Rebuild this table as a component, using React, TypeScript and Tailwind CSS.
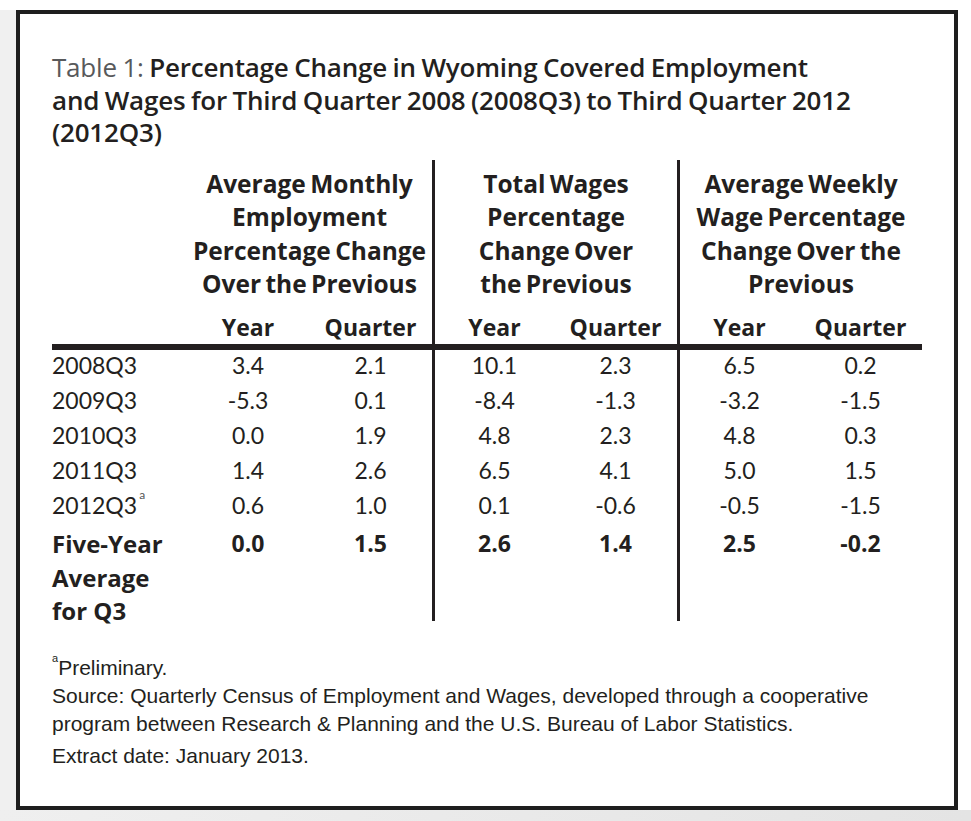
import React from "react";

const rows: [string, string[], boolean?][] = [
  ["2008Q3", ["3.4", "2.1", "10.1", "2.3", "6.5", "0.2"]],
  ["2009Q3", ["-5.3", "0.1", "-8.4", "-1.3", "-3.2", "-1.5"]],
  ["2010Q3", ["0.0", "1.9", "4.8", "2.3", "4.8", "0.3"]],
  ["2011Q3", ["1.4", "2.6", "6.5", "4.1", "5.0", "1.5"]],
  ["2012Q3", ["0.6", "1.0", "0.1", "-0.6", "-0.5", "-1.5"], true],
];
const avg = ["0.0", "1.5", "2.6", "1.4", "2.5", "-0.2"];

const groups = [
  ["Average Monthly", "Employment", "Percentage Change", "Over the Previous"],
  ["Total Wages", "Percentage", "Change Over", "the Previous"],
  ["Average Weekly", "Wage Percentage", "Change Over the", "Previous"],
];

export default function App() {
  const divider = (i: number) => (i === 2 || i === 4 ? "border-l-[3px] border-l-[#231f20]" : "");
  return (
    <div className="w-[971px] h-[821px] bg-white flex flex-col text-[#231f20] [font-family:Lato,'Open_Sans',sans-serif]">
      <div className="h-[10px]" />
      <div className="flex h-[800px]">
        <div className="w-[16px] bg-[#f0f0f0]" />
        <div className="w-[942px] border-4 border-[#1e1e1e] pl-[32px] pt-[37px]">
          <h1 className="text-[26px] leading-[32.5px] font-semibold tracking-[-0.2px] [word-spacing:-1px] [font-family:'Open_Sans',sans-serif]">
            <span className="font-normal text-[#58595b]">Table 1: </span>
            Percentage Change in Wyoming Covered Employment
            <br />
            and Wages for Third Quarter 2008 (2008Q3) to Third Quarter 2012
            <br />
            (2012Q3)
          </h1>
          <div className="mt-[11px] grid grid-cols-[135px_122px_123px_122px_123px_122px_123px] w-[870px]">
            {/* group headers */}
            <div />
            {groups.map((g, gi) => (
              <div
                key={gi}
                className={`col-span-2 pt-[7px] text-center text-[24.5px] leading-[33.5px] font-bold [word-spacing:-2px] [font-family:'Open_Sans',sans-serif] ${gi > 0 ? "border-l-[3px] border-l-[#231f20]" : ""}`}
              >
                {g.map((l, li) => (
                  <div key={li} className="whitespace-nowrap">{l}</div>
                ))}
              </div>
            ))}
            {/* sub headers */}
            <div className="border-b-[6px] border-b-[#231f20]" />
            {["Year", "Quarter", "Year", "Quarter", "Year", "Quarter"].map((t, i) => (
              <div
                key={i}
                className={`pt-[10px] text-center text-[23px] leading-[33.5px] font-bold [font-family:'Open_Sans',sans-serif] border-b-[6px] border-b-[#231f20] ${divider(i)}`}
              >
                {t}
              </div>
            ))}
            {/* data rows */}
            {rows.map(([label, vals, sup]) => (
              <React.Fragment key={label}>
                <div className="h-[35px] text-[23px] leading-[30px]">
                  {label}
                  {sup && <sup className="text-[12px] align-top relative top-[5px] ml-[2px] text-[#555]">a</sup>}
                </div>
                {vals.map((v, i) => (
                  <div key={i} className={`h-[35px] text-center text-[23px] leading-[30px] ${divider(i)}`}>
                    {v}
                  </div>
                ))}
              </React.Fragment>
            ))}
            {/* five-year average */}
            <div className="h-[96px] pt-[2px] text-[24px] leading-[33.5px] font-bold [font-family:'Open_Sans',sans-serif]">
              Five-Year
              <br />
              Average
              <br />
              for Q3
            </div>
            {avg.map((v, i) => (
              <div key={i} className={`h-[96px] pt-[2px] text-center text-[23px] leading-[33.5px] font-bold [font-family:'Open_Sans',sans-serif] ${divider(i)}`}>
                {v}
              </div>
            ))}
          </div>
          <div className="mt-[33px] text-[21px] leading-[28px] [font-family:'Liberation_Sans',Arial,sans-serif]">
            <div>
              <sup className="text-[11px] align-top relative top-[4px]">a</sup>Preliminary.
            </div>
            <div>Source: Quarterly Census of Employment and Wages, developed through a cooperative</div>
            <div>program between Research &amp; Planning and the U.S. Bureau of Labor Statistics.</div>
            <div className="mt-[4px]">Extract date: January 2013.</div>
          </div>
        </div>
        <div className="flex-1 bg-white" />
      </div>
      <div className="flex-1 bg-gradient-to-r from-[#efefef] to-[#e4e4e4]" />
    </div>
  );
}
